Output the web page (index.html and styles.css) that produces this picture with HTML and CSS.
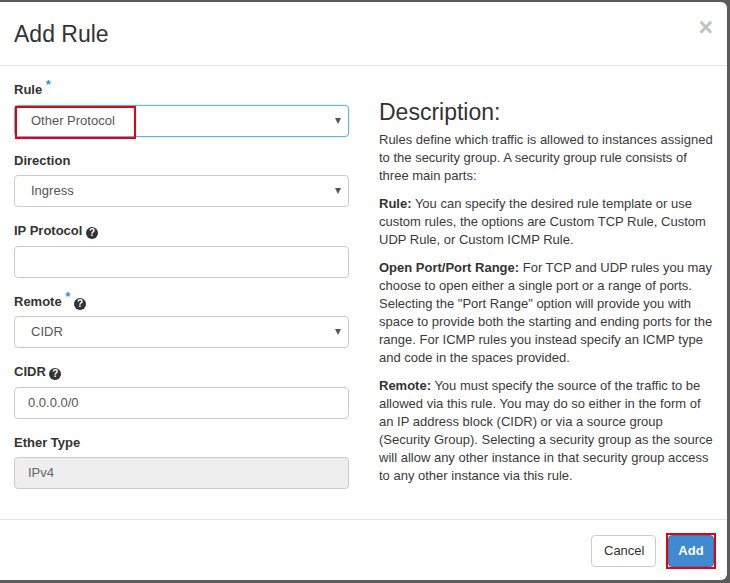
FILE: index.html
```html
<!DOCTYPE html>
<html lang="en">
<head>
<meta charset="utf-8">
<title>Add Rule</title>
<link rel="stylesheet" href="styles.css">
</head>
<body>
<div class="modal">
  <div class="modal-header">
    <h4 class="modal-title">Add Rule</h4>
    <span class="close">&times;</span>
  </div>
  <div class="modal-body">
    <div class="form-col">
      <div class="form-group">
        <label class="label">Rule <span class="req">*</span></label>
        <div class="select-wrap focused">
          <div class="control">Other Protocol</div>
          <span class="caret"></span>
          <span class="annot annot-rule"></span>
        </div>
      </div>
      <div class="form-group">
        <label class="label">Direction</label>
        <div class="select-wrap">
          <div class="control">Ingress</div>
          <span class="caret"></span>
        </div>
      </div>
      <div class="form-group">
        <label class="label">IP Protocol <span class="help">?</span></label>
        <div class="control input"></div>
      </div>
      <div class="form-group">
        <label class="label">Remote <span class="req">*</span> <span class="help">?</span></label>
        <div class="select-wrap">
          <div class="control">CIDR</div>
          <span class="caret"></span>
        </div>
      </div>
      <div class="form-group">
        <label class="label">CIDR <span class="help">?</span></label>
        <div class="control input">0.0.0.0/0</div>
      </div>
      <div class="form-group">
        <label class="label">Ether Type</label>
        <div class="control input disabled">IPv4</div>
      </div>
    </div>
    <div class="desc-col">
      <h3 class="desc-title">Description:</h3>
      <p>Rules define which traffic is allowed to instances assigned to the security group. A security group rule consists of three main parts:</p>
      <p><strong>Rule:</strong> You can specify the desired rule template or use custom rules, the options are Custom TCP Rule, Custom UDP Rule, or Custom ICMP Rule.</p>
      <p><strong>Open Port/Port Range:</strong> For TCP and UDP rules you may choose to open either a single port or a range of ports. Selecting the "Port Range" option will provide you with space to provide both the starting and ending ports for the range. For ICMP rules you instead specify an ICMP type and code in the spaces provided.</p>
      <p><strong>Remote:</strong> You must specify the source of the traffic to be allowed via this rule. You may do so either in the form of an IP address block (CIDR) or via a source group (Security Group). Selecting a security group as the source will allow any other instance in that security group access to any other instance via this rule.</p>
    </div>
  </div>
  <div class="modal-footer">
    <button class="btn btn-default">Cancel</button>
    <button class="btn btn-primary">Add<span class="annot annot-add"></span></button>
  </div>
</div>
</body>
</html>
```

FILE: styles.css
```css
* { box-sizing: border-box; }
html, body { margin: 0; padding: 0; }
body {
  background: #5b5b5b;
  width: 730px;
  height: 583px;
  overflow: hidden;
  font-family: "Liberation Sans", Arial, sans-serif;
  font-size: 13px;
  line-height: 18px;
  color: #333;
}
.modal {
  margin: 2px 3px 0 0;
  height: 578px;
  background: #fff;
  border-radius: 0 6px 6px 0;
  display: flex;
  flex-direction: column;
}
.modal-header {
  display: flex;
  justify-content: space-between;
  align-items: flex-start;
  padding: 15px 14px 14px 14px;
  border-bottom: 1px solid #e5e5e5;
  height: 64px;
}
.modal-title {
  margin: 0;
  font-size: 23px;
  font-weight: normal;
  line-height: 34px;
  color: #333;
}
.close {
  font-size: 25px;
  font-weight: bold;
  line-height: 20px;
  color: #c2c2c2;
  margin-top: 0;
  margin-right: 0;
}
.modal-body {
  display: grid;
  grid-template-columns: 335px 337px;
  column-gap: 30px;
  padding: 15px 14px;
  flex: 1;
}
.form-group { margin-bottom: 15px; }
.form-group:last-child { margin-bottom: 0; }
.label {
  display: block;
  font-weight: bold;
  margin-bottom: 5px;
  color: #333;
  line-height: 18.57px;
  height: 18.57px;
}
.req {
  color: #3b8fd8;
  position: relative;
  top: -5px;
  font-weight: bold;
}
.help {
  display: inline-block;
  width: 12px;
  height: 12px;
  border-radius: 50%;
  background: #333;
  color: #fff;
  font-size: 10px;
  line-height: 12px;
  text-align: center;
  font-weight: bold;
  vertical-align: -1px;
}
.control {
  height: 32px;
  border: 1px solid #ccc;
  border-radius: 4px;
  padding: 6px 12px 6px 16px;
  line-height: 18px;
  color: #555;
  background: #fff;
}
.control.input { padding-left: 13px; }
.control.disabled { background: #eee; color: #666; }
.select-wrap { position: relative; }
.select-wrap.focused .control {
  border-color: #66afe9;
  box-shadow: 0 0 2px rgba(102, 175, 233, 0.5);
}
.caret {
  position: absolute;
  right: 8px;
  top: 13px;
  width: 0;
  height: 0;
  border-left: 3px solid transparent;
  border-right: 3px solid transparent;
  border-top: 6px solid #555;
}
.annot {
  position: absolute;
  border: 2px solid #e8000b;
  pointer-events: none;
}
.annot-rule { left: 1px; top: 1px; width: 121px; height: 33px; }
.desc-title {
  margin: 18px 0 6px 0;
  font-size: 23px;
  font-weight: normal;
  line-height: 26px;
  color: #333;
}
.desc-col p { margin: 0 0 10px 0; color: #3a3a3a; }
.desc-col strong { color: #333; }
.modal-footer {
  display: flex;
  justify-content: flex-end;
  gap: 12px;
  padding: 15px 13px 13px 14px;
  border-top: 1px solid #e5e5e5;
}
.btn {
  font-family: inherit;
  font-size: 13px;
  line-height: 18px;
  height: 32px;
  padding: 6px 12px;
  border-radius: 4px;
  border: 1px solid #ccc;
  background: #fff;
  color: #333;
  position: relative;
}
.btn-default { width: 65px; }
.btn-primary {
  background: #3f8ad0;
  border-color: #2f7bc2;
  color: #fff;
  font-weight: bold;
  width: 46px;
  padding: 6px 0;
}
.annot-add { left: -3px; top: -3px; right: -3px; bottom: -3px; }
```
